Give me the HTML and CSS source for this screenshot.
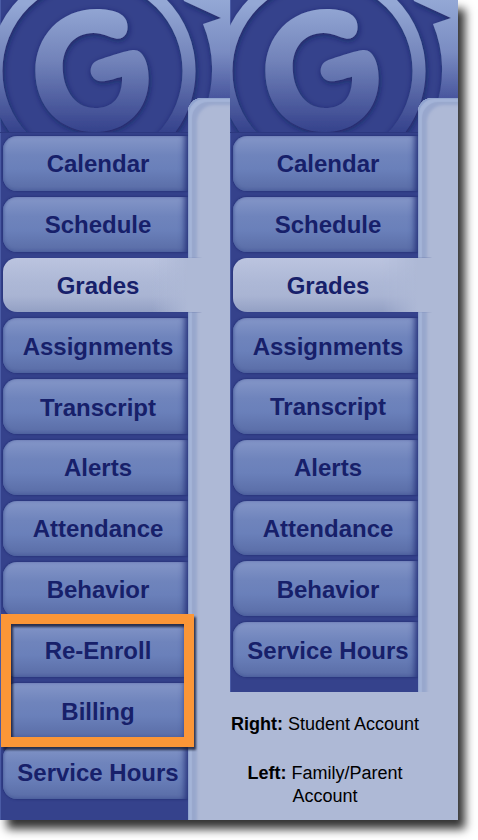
FILE: index.html
```html
<!DOCTYPE html>
<html lang="en">
<head>
<meta charset="utf-8">
<meta name="viewport" content="width=device-width, initial-scale=1">
<title>Account menus</title>
<link rel="stylesheet" href="styles.css">
</head>
<body>
<svg width="0" height="0" class="defs" aria-hidden="true">
  <defs>
    <linearGradient id="fade" gradientUnits="userSpaceOnUse" x1="0" y1="4" x2="0" y2="132">
      <stop offset="0" stop-color="#94a8d5"/>
      <stop offset="0.45" stop-color="#7182b9"/>
      <stop offset="1" stop-color="#35428c"/>
    </linearGradient>
    <linearGradient id="fade-sky" gradientUnits="userSpaceOnUse" x1="0" y1="0" x2="0" y2="104">
      <stop offset="0" stop-color="#94a8d5"/>
      <stop offset="0.5" stop-color="#7a8cc2"/>
      <stop offset="1" stop-color="#424f99"/>
    </linearGradient>
    <filter id="shade" x="-20%" y="-20%" width="140%" height="140%">
      <feDropShadow dx="1" dy="2" stdDeviation="3" flood-color="#141d55" flood-opacity="0.7"/>
    </filter>
    <symbol id="emblem" viewBox="0 0 230 132">
      <path filter="url(#shade)" fill="url(#fade-sky)" d="M183 -2 L184 1 L221 18 L203 24 A119 119 0 0 1 205 110 H250 V-2 Z"/>
      <circle filter="url(#shade)" cx="92.500" cy="71" r="96.500" fill="none" stroke="url(#fade)" stroke-width="13"/>
      <path filter="url(#shade)" fill="url(#fade)" d="M116.700 38.700 C125 39.300 128.700 31.700 127.300 24 C126 13.300 113.300 9.300 96.700 9 C60 9 35.300 36.700 35.300 70.700 C35.300 106.700 60 132 95 132 C126.700 132 148.700 110 148.700 78.300 C148.700 63.300 143.300 50 134 50 C128.300 50 110 56 98.300 60 C87.300 64 88.300 80 101 81.300 C106.700 81.700 115 78.300 122 76.700 C122.700 96.700 113.300 108 95 108 C73.300 108 62.700 86.700 62.700 66.700 C62.700 46.700 75 33 93.300 33 C103.300 33 108.300 37.300 116.700 38.700 Z"/>
    </symbol>
  </defs>
</svg>
<main class="board">
  <section class="account">
    <svg class="emblem" viewBox="0 0 230 132" preserveAspectRatio="xMinYMin slice" role="img" aria-label="G"><use href="#emblem" width="230" height="132"/></svg>
    <nav class="menu" aria-label="Family/Parent Account">
      <ul class="tabs tabs-family">
        <li><a class="tab" href="#">Calendar</a></li>
        <li><a class="tab" href="#">Schedule</a></li>
        <li><a class="tab tab-active" href="#" aria-current="page">Grades</a></li>
        <li><a class="tab" href="#">Assignments</a></li>
        <li><a class="tab" href="#">Transcript</a></li>
        <li><a class="tab" href="#">Alerts</a></li>
        <li><a class="tab" href="#">Attendance</a></li>
        <li><a class="tab" href="#">Behavior</a></li>
        <li class="marked"><a class="tab" href="#">Re-Enroll</a><span class="marker"></span></li>
        <li><a class="tab" href="#">Billing</a></li>
        <li><a class="tab" href="#">Service Hours</a></li>
      </ul>
    </nav>
    <div class="page-edge"></div>
  </section>
  <div class="side">
    <section class="account">
      <svg class="emblem" viewBox="0 0 230 132" preserveAspectRatio="xMinYMin slice" role="img" aria-label="G"><use href="#emblem" width="230" height="132"/></svg>
      <nav class="menu" aria-label="Student Account">
        <ul class="tabs tabs-student">
          <li><a class="tab" href="#">Calendar</a></li>
          <li><a class="tab" href="#">Schedule</a></li>
          <li><a class="tab tab-active" href="#" aria-current="page">Grades</a></li>
          <li><a class="tab" href="#">Assignments</a></li>
          <li><a class="tab" href="#">Transcript</a></li>
          <li><a class="tab" href="#">Alerts</a></li>
          <li><a class="tab" href="#">Attendance</a></li>
          <li><a class="tab" href="#">Behavior</a></li>
          <li><a class="tab" href="#">Service Hours</a></li>
        </ul>
      </nav>
      <div class="page-edge"></div>
    </section>
    <div class="caption">
      <p><strong>Right:</strong> Student Account</p>
      <p><strong>Left:</strong> Family/Parent Account</p>
    </div>
  </div>
</main>
</body>
</html>
```
FILE: styles.css
```css
:root {
  --navy: #35428c;
  --page: #aeb9d6;
  --ink: #17206a;
}

* {
  box-sizing: border-box;
}

body {
  margin: 0;
  padding: 0 20px 20px 0;
  background: #fff;
  font-family: "Liberation Sans", Arial, Helvetica, sans-serif;
}

.defs {
  position: absolute;
}

.board {
  display: grid;
  grid-template-columns: 115fr 114fr;
  background: var(--page);
  box-shadow: 7px 9px 9px 0 rgba(0, 0, 0, 0.8);
}

.account {
  display: grid;
  grid-template-columns: 188px 1fr;
  grid-template-rows: 132px 1fr;
  background: var(--navy);
  box-shadow: inset 1px 0 #4a5ba5;
}

.emblem {
  grid-column: 1 / 3;
  grid-row: 1;
  width: 100%;
  height: 132px;
}

.menu {
  grid-column: 1;
  grid-row: 2;
  z-index: 1;
  min-width: 0;
  border-top: 1px solid #2c387f;
}

.page-edge {
  grid-column: 2;
  grid-row: 1 / 3;
  margin-top: 98px;
  background: var(--page);
  border-radius: 14px 0 0 0;
  box-shadow:
    inset 2px 2px 1px -1px #8fa3cf,
    inset 6px 6px 1px -2px #a4b4d8,
    inset 12px 10px 3px -3px #98a7cd;
}

.tabs {
  display: grid;
  grid-auto-rows: 1fr;
  margin: 0;
  padding: 0;
  list-style: none;
}

.tabs-family {
  min-height: 669px;
  margin-bottom: 18px;
}

.tabs-student {
  min-height: 547px;
  margin-bottom: 12px;
}

.tabs li {
  display: grid;
  padding: 3px 0 3px 3px;
}

.tab {
  display: flex;
  align-items: center;
  justify-content: center;
  padding: 2px 0 0 5px;
  border-radius: 14px 0 0 14px;
  background: linear-gradient(#8496c8, #6f84bc 35%, #6a80ba 60%, #596ca6);
  box-shadow:
    0 0 2px 1px #29357c,
    inset -7px 0 6px -4px #27337c,
    inset 1px -1px 3px #5063a0;
  clip-path: inset(-3px 0 -3px -3px);
  color: var(--ink);
  font-size: 24px;
  font-weight: 700;
  line-height: 28px;
  text-decoration: none;
}

.tab-active {
  margin-right: -14px;
  padding-right: 14px;
  background:
    linear-gradient(to right, transparent 75%, var(--page) 93%),
    linear-gradient(#bbc4df, #adb8d6 45%, #a9b4d3 70%, #93a0c4);
  box-shadow: -1px 0 2px #29357c;
  clip-path: inset(0 0 0 -3px);
}

.marked {
  position: relative;
}

/* Frame round the two entries that only family accounts have */
.marker {
  position: absolute;
  z-index: 2;
  top: -6px;
  left: 1px;
  right: -6px;
  height: 133px;
  border: 10px solid #fb9637;
  filter: drop-shadow(2px 3px 1px rgba(20, 25, 50, 0.8));
  pointer-events: none;
}

.caption {
  padding: 21px 38px 11px 0;
  color: #000;
  font-size: 18px;
  line-height: 23px;
  text-align: center;
}

.caption p {
  margin: 0 0 26px;
}

.caption p:last-child {
  margin-bottom: 0;
}
```
